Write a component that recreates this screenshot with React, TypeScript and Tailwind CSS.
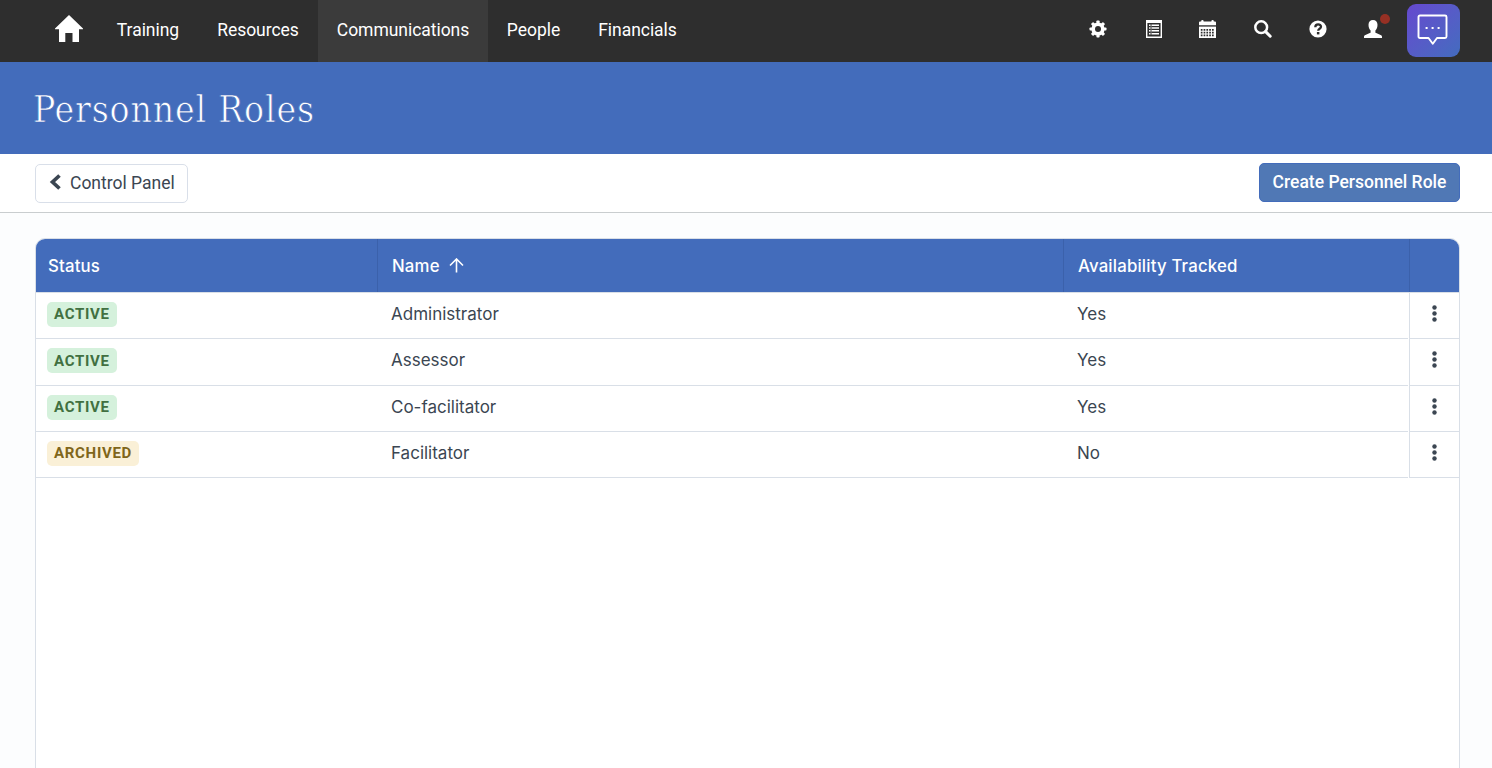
import type { ReactNode } from "react";
import { clsx } from "clsx";

interface Role {
  status: "Active" | "Archived";
  name: string;
  tracked: boolean;
}

const roles: Role[] = [
  { status: "Active", name: "Administrator", tracked: true },
  { status: "Active", name: "Assessor", tracked: true },
  { status: "Active", name: "Co-facilitator", tracked: true },
  { status: "Archived", name: "Facilitator", tracked: false },
];

const navItems = [
  { label: "Training", width: "w-[100px]" },
  { label: "Resources", width: "w-[120px]" },
  { label: "Communications", width: "w-[170px]", active: true },
  { label: "People", width: "w-[91px]" },
  { label: "Financials", width: "w-[117px]" },
];

const gridCols = "grid grid-cols-[342px_686px_346px_1fr]";

function IconLink({ label, className, children }: { label: string; className?: string; children: ReactNode }) {
  return (
    <button aria-label={label} className={clsx("relative flex h-[57px] w-[55px] items-center justify-center text-white", className)}>
      {children}
    </button>
  );
}

function GearIcon() {
  return (
    <svg width="18" height="18" viewBox="0 0 18 18" fill="currentColor">
      <g>
        <rect x="7.4" y="0.5" width="3.2" height="17" rx="0.8" />
        <rect x="7.4" y="0.5" width="3.2" height="17" rx="0.8" transform="rotate(45 9 9)" />
        <rect x="7.4" y="0.5" width="3.2" height="17" rx="0.8" transform="rotate(90 9 9)" />
        <rect x="7.4" y="0.5" width="3.2" height="17" rx="0.8" transform="rotate(135 9 9)" />
        <circle cx="9" cy="9" r="6.6" />
      </g>
      <circle cx="9" cy="9" r="3" fill="#2e2e2e" />
    </svg>
  );
}

function ListIcon() {
  return (
    <svg width="16" height="18" viewBox="0 0 16 18" fill="currentColor">
      <path fillRule="evenodd" d="M0 0h16v18H0zM1.4 3v13.500h13.200V3z" />
      <path d="M3 4.500h1.500v1.400H3zM5.600 4.500H13v1.400H5.600zM3 7.300h1.500v1.400H3zM5.600 7.300H13v1.400H5.600zM3 10.100h1.500v1.400H3zM5.600 10.100H13v1.400H5.600zM3 12.900h1.500v1.500H3zM5.600 12.900H13v1.500H5.600z" />
      <path d="M4.700 4.500h.7v9.900h-.7z" opacity=".5" />
    </svg>
  );
}

function CalendarIcon() {
  return (
    <svg width="17" height="18" viewBox="0 0 17 18" fill="currentColor">
      <path d="M0 2.600Q0 1.600 1 1.600h1.200V1q0-1 1.200-1t1.200 1v.6h7.800V1q0-1 1.200-1t1.200 1v.6H16q1 0 1 1V5.300H0z" />
      <path d="M0 6.600h17V18H0z" />
      <g stroke="#2e2e2e" strokeWidth="1.7" strokeDasharray="1.7 1.1">
        <path d="M1.800 9.800h13.200M1.800 12.600h13.200M1.800 15.400h13.200" />
      </g>
    </svg>
  );
}

function SearchIcon() {
  return (
    <svg width="18" height="18" viewBox="0 0 18 18" fill="none" stroke="currentColor">
      <circle cx="7.2" cy="7.2" r="5.9" strokeWidth="2.500" />
      <path d="M11.600 11.600l4.600 4.600" strokeWidth="3" strokeLinecap="round" />
    </svg>
  );
}

function HelpIcon() {
  return (
    <svg width="18" height="18" viewBox="0 0 18 18">
      <circle cx="9" cy="9" r="8.600" fill="currentColor" />
      <path d="M6.300 7.200C6.300 3.600 12 3.700 12 6.700c0 2.100-2.800 2-2.800 4.100" fill="none" stroke="#2e2e2e" strokeWidth="2.300" />
      <rect x="7.900" y="12" width="2.500" height="2.400" fill="#2e2e2e" />
    </svg>
  );
}

function UserIcon() {
  return (
    <svg width="18" height="18" viewBox="0 0 18 18" fill="currentColor">
      <path d="M9 0C6.300 0 4.500 1.800 4.500 4.700c0 2.700.9 4.700 2.100 5.800v1.400c0 .7-.2 1-.8 1.200L1.400 15C.5 15.400 0 16 0 16.900V18h18v-1.100c0-.9-.5-1.500-1.400-1.900l-4.400-1.900c-.6-.2-.8-.5-.8-1.200v-1.400c1.200-1.100 2.100-3.100 2.100-5.800C13.500 1.800 11.700 0 9 0z" />
    </svg>
  );
}

function NavBar() {
  return (
    <header className="flex h-[62px] justify-between bg-[#2e2e2e] pr-8 text-white">
      <nav className="flex">
        <a aria-label="Home" className="flex w-[98px] items-start pl-[55px] pt-[15px]">
          <svg width="28" height="27" viewBox="0 0 28 27" fill="currentColor">
            <path d="M14 0L0 13.500v.7h4V27h6.300V18h7.200v9H24V14.200h4v-.7z" />
          </svg>
        </a>
        {navItems.map((item) => (
          <a
            key={item.label}
            className={clsx(
              "flex items-center justify-center pb-px text-[17.5px] tracking-[-0.04px]",
              item.width,
              item.active && "bg-[#3b3b3b]"
            )}
          >
            {item.label}
          </a>
        ))}
      </nav>

      <div className="flex items-start">
        <IconLink label="Settings"><GearIcon /></IconLink>
        <IconLink label="Reports" className="pl-0.5"><ListIcon /></IconLink>
        <IconLink label="Calendar" className="pr-px"><CalendarIcon /></IconLink>
        <IconLink label="Search"><SearchIcon /></IconLink>
        <IconLink label="Help"><HelpIcon /></IconLink>
        <IconLink label="Account">
          <UserIcon />
          <span className="absolute left-[35px] top-3.5 size-2.5 rounded-full bg-[#963024]" />
        </IconLink>
        <button aria-label="Chat" className="ml-[7px] mt-1 flex size-[53px] items-center justify-center rounded-[9px] bg-linear-to-br from-[#6548cf] to-[#426cbf] pb-0.5 pr-0.5">
          <svg width="31" height="31" viewBox="0 0 31 31" fill="none" stroke="white" strokeWidth="1.900" strokeLinejoin="round">
            <path d="M3 1.500h25q1.500 0 1.500 1.500v19.500q0 1.500-1.500 1.500h-8l-4.200 5.800L11.500 24H3q-1.500 0-1.500-1.500V3Q1.500 1.500 3 1.500z" />
            <path d="M8.600 14h2M14.600 14h2M20.600 14h2" strokeWidth="2" />
          </svg>
        </button>
      </div>
    </header>
  );
}

function StatusBadge({ status }: { status: Role["status"] }) {
  return (
    <span
      className={clsx(
        "flex h-[25px] items-center rounded-[5px] px-[7px] font-['Roboto',sans-serif] text-[15px] font-bold uppercase tracking-[0.7px]",
        status === "Active" ? "bg-[#d5f1dc] text-[#417041]" : "bg-[#faf0d7] text-[#80661a]"
      )}
    >
      {status}
    </span>
  );
}

function RolesTable() {
  return (
    <div className="h-[560px] overflow-hidden rounded-t-[10px] border border-[#d9dfe7] bg-white font-['Inter',sans-serif] text-[17px] text-[#3b4652]">
      <div className={clsx(gridCols, "h-[54px] border-b border-[#d9dfe7] bg-[#436cbb] text-[16.8px] font-medium tracking-[0.18px] text-white")}>
        <div className="flex items-center border-r border-[#3b61ab] pl-3 pt-[3px]">Status</div>
        <div className="flex items-center border-r border-[#3b61ab] pl-3.5 pt-[3px]">
          Name
          <svg className="-mt-1 ml-[9px]" width="15" height="15" viewBox="0 0 15 15" fill="none" stroke="currentColor" strokeWidth="1.600">
            <path d="M7.500 14.500V1M1 7.500l6.500-6.500 6.500 6.500" />
          </svg>
        </div>
        <div className="flex items-center border-r border-[#3b61ab] pl-3.5 pt-[3px]">Availability Tracked</div>
        <div />
      </div>

      {roles.map((role) => (
        <div key={role.name} className={clsx(gridCols, "h-[46.250px]")}>
          <div className="flex items-center border-b border-[#d9dfe7] pb-0.5 pl-[11px]">
            <StatusBadge status={role.status} />
          </div>
          <div className="flex items-center border-b border-[#d9dfe7] pb-[1.500px] pl-[13px]">{role.name}</div>
          <div className="mr-0.5 flex items-center border-b border-[#d9dfe7] pb-[1.500px] pl-[13px]">{role.tracked ? "Yes" : "No"}</div>
          <button aria-label="Row actions" className="-ml-px flex items-center justify-center border-b border-l border-[#d9dfe7] pb-1 pr-px">
            <svg width="5" height="17" viewBox="0 0 5 17" fill="currentColor">
              <circle cx="2.500" cy="2.500" r="2.200" />
              <circle cx="2.500" cy="8.500" r="2.200" />
              <circle cx="2.500" cy="14.500" r="2.200" />
            </svg>
          </button>
        </div>
      ))}
    </div>
  );
}

export default function App() {
  return (
    <div className="h-[768px] overflow-hidden bg-[#fcfdfe] font-['Roboto',sans-serif]">
      <NavBar />

      {/* Page title */}
      <div className="flex h-[92px] items-center bg-[#436cbb] pl-[33px] pt-1">
        <h1 className="whitespace-nowrap font-['DejaVu_Serif',serif] text-[37px] tracking-[0.8px] text-white [-webkit-text-stroke:0.7px_#436cbb] [font-stretch:condensed]">
          Personnel Roles
        </h1>
      </div>

      {/* Toolbar */}
      <div className="flex h-[59px] items-start justify-between border-b border-[#c9cdcf] bg-white pl-[35px] pr-8 pt-[9px]">
        <button className="mt-px flex h-[39px] w-[153px] items-center rounded-[5px] border border-[#d9dfe9] pb-px pl-[13px] text-[17.5px] text-[#3b4652]">
          <svg className="-mt-0.5 mr-2" width="13" height="16" viewBox="0 0 13 16" fill="none" stroke="currentColor" strokeWidth="3.700">
            <path d="M10.500 1.500L3.500 8l7 6.500" />
          </svg>
          Control Panel
        </button>
        <button className="flex h-[39px] w-[201px] items-center justify-center rounded-[5px] border border-[#436cbb] bg-[#5078b5] text-[17.5px] font-medium text-white">
          Create Personnel Role
        </button>
      </div>

      <main className="pl-[35px] pr-8 pt-[25px]">
        <RolesTable />
      </main>
    </div>
  );
}
